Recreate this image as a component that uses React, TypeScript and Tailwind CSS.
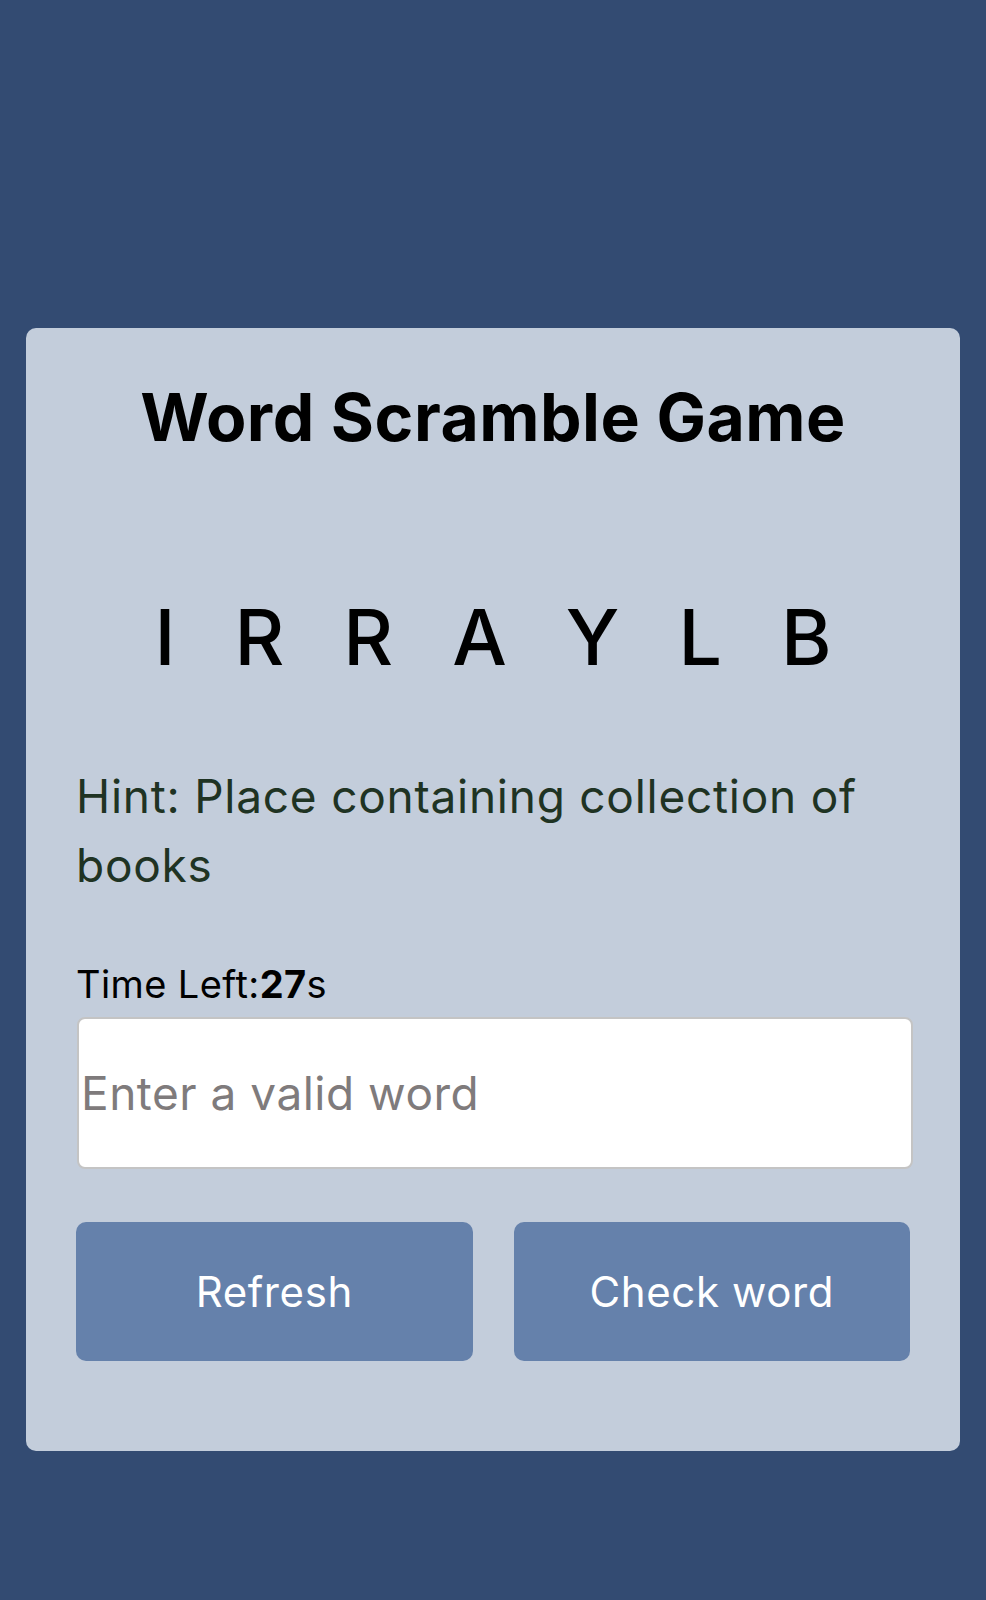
import React from "react";

export default function App() {
  const letters = ["I", "R", "R", "A", "Y", "L", "B"];
  return (
    <div
      className="min-h-[1600px] w-full bg-[#334b72] pt-[328px]"
      style={{ fontFamily: "Inter, 'Noto Sans', sans-serif" }}
    >
      <div className="mx-[26px] rounded-[10px] bg-[#c3cddb] px-[50px] pt-[49px] pb-[90px]">
        <h1 className="text-center text-[66px] font-bold leading-[80px] tracking-[0.5px] text-black">
          Word Scramble Game
        </h1>
        <div className="mt-[130px] flex justify-center gap-[59px] text-[77px] font-medium leading-[100px] text-black">
          {letters.map((l, i) => (
            <span key={i}>{l}</span>
          ))}
        </div>
        <p className="mt-[75px] text-[46px] leading-[69px] tracking-[0.75px] text-[#1f3323]">
          Hint: Place containing collection of books
        </p>
        <p className="mt-[61px] text-[38px] leading-[46px] tracking-[0.4px] text-black">
          Time Left:<span className="font-bold">27</span>s
        </p>
        <input
          type="text"
          placeholder="Enter a valid word"
          className="mt-[10px] ml-[1px] block h-[152px] w-[calc(100%+2px)] rounded-[8px] border-2 border-[#c4c4c4] bg-white px-[2px] text-[46px] tracking-[0.5px] text-black outline-none placeholder:text-[#7f7b7c]"
        />
        <div className="mt-[53px] grid grid-cols-2 gap-[41px]">
          <button className="h-[139px] rounded-[10px] bg-[#6581ab] text-[42px] tracking-[0.6px] text-white">
            Refresh
          </button>
          <button className="h-[139px] rounded-[10px] bg-[#6581ab] text-[42px] tracking-[0.6px] text-white">
            Check word
          </button>
        </div>
      </div>
    </div>
  );
}
